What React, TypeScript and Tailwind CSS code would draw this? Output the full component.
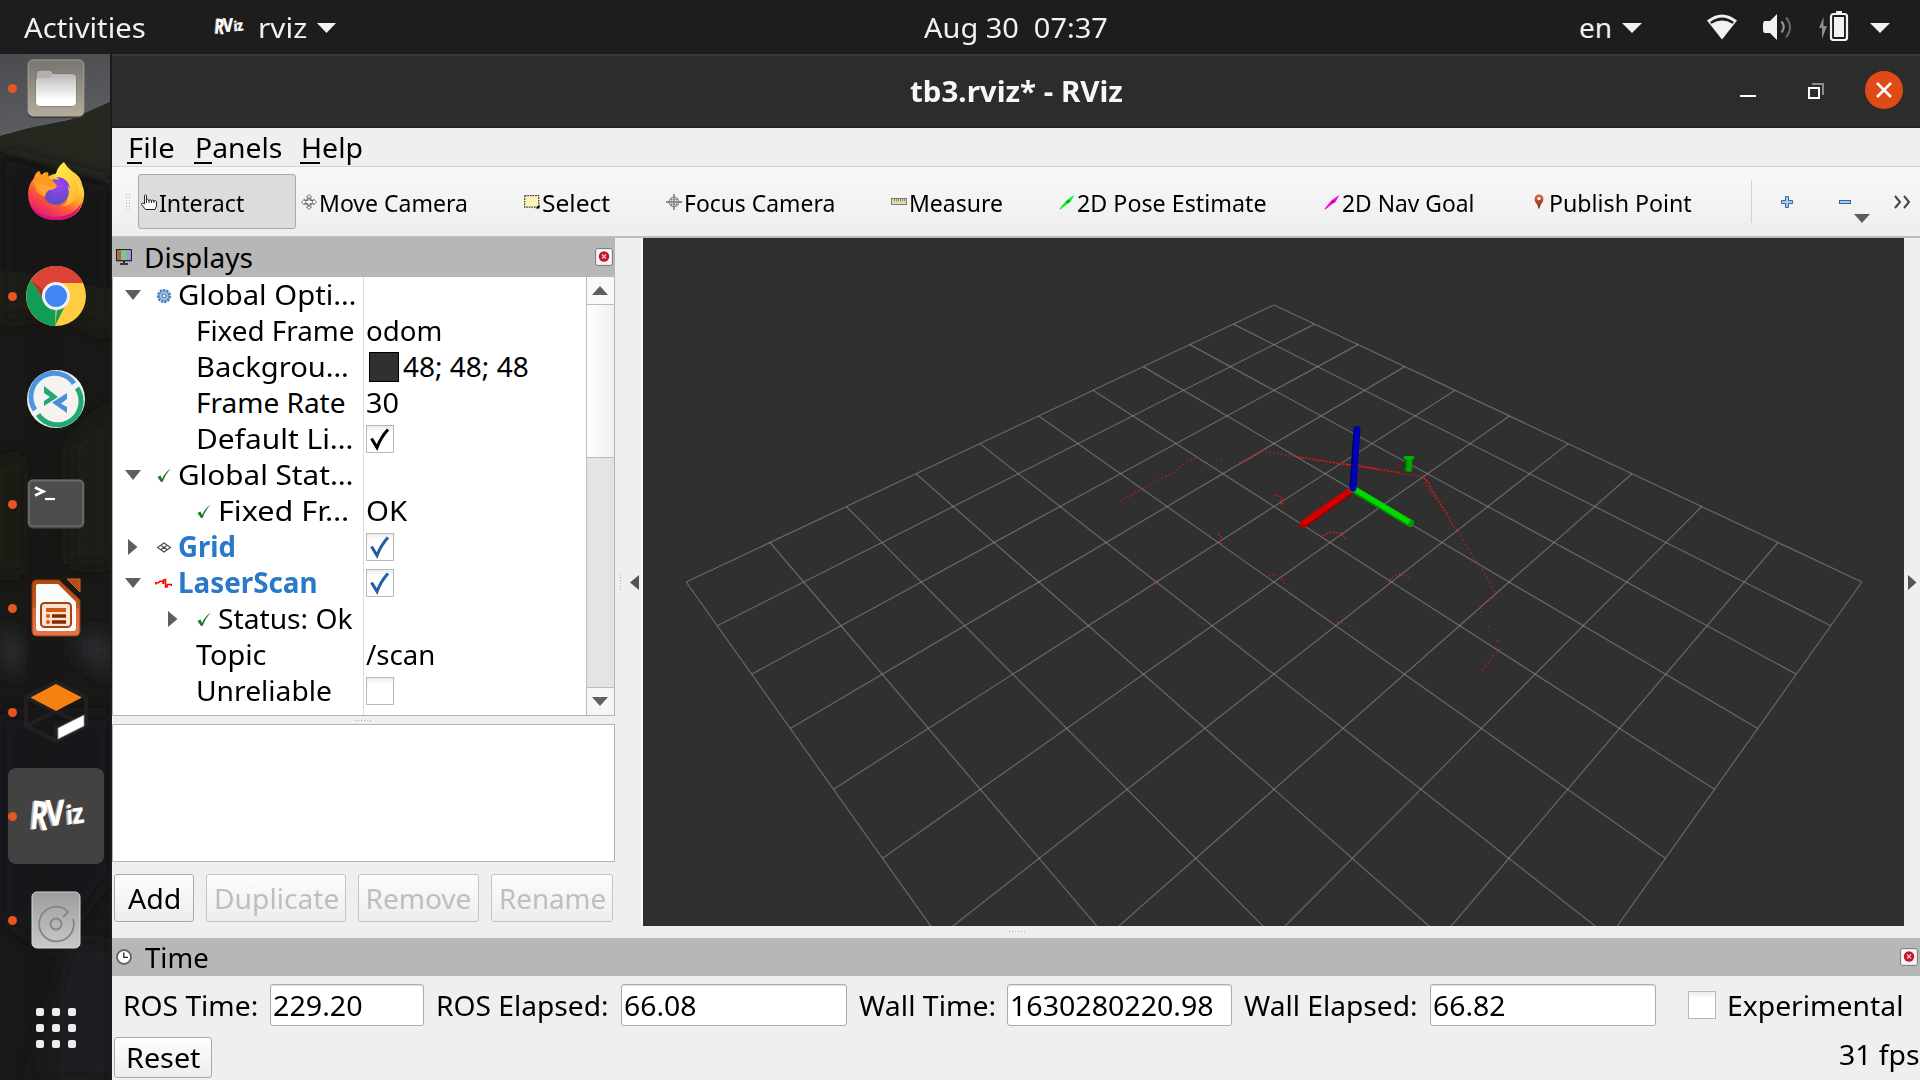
import { useLayoutEffect, useRef, useState, type ReactNode } from "react";

/** A single line of text condensed or widened to occupy exactly `w` pixels. */
function T({ w, children, className = "" }: { w: number; children: ReactNode; className?: string }) {
  const ref = useRef<HTMLSpanElement>(null);
  const [s, setS] = useState(1);
  useLayoutEffect(() => {
    if (ref.current) setS(w / ref.current.offsetWidth);
  }, [w]);
  return (
    <span className={`block shrink-0 whitespace-pre ${className}`} style={{ width: w }}>
      <span ref={ref} className="inline-block origin-left" style={{ transform: `scaleX(${s})` }}>
        {children}
      </span>
    </span>
  );
}

const Down = ({ className = "" }: { className?: string }) => (
  <svg className={`shrink-0 ${className}`} viewBox="0 0 20 10" preserveAspectRatio="none" fill="currentColor">
    <path d="M0 0H20L10 10Z" />
  </svg>
);

function RvizMark({ className = "" }: { className?: string }) {
  const letters = (
    <>
      <text fontSize="41" transform="translate(2.500 31.500) rotate(5) scale(.68 1)">R</text>
      <text fontSize="37" transform="translate(20 28.500) rotate(-2) scale(.82 1)">V</text>
      <text fontSize="27" transform="translate(41 27) rotate(-3) scale(.85 1)">i</text>
      <text fontSize="29" transform="translate(48 26.500) rotate(-7) scale(.85 1)">z</text>
    </>
  );
  return (
    <svg viewBox="0 0 60 38" className={`overflow-visible ${className}`} fontFamily="Open Sans, sans-serif" fontWeight="700">
      <g fill="#b4b4b4" transform="translate(-1.8 .8)">{letters}</g>
      <g fill="#fff">{letters}</g>
    </svg>
  );
}

/* ---------- Top bar ---------- */

function TopBar() {
  return (
    <header className="flex h-[54px] shrink-0 items-center bg-[#1d1d1d] text-[28px] leading-[52px] text-[#f2f2f2]">
      <T w={122} className="mb-px ml-6">Activities</T>
      <RvizMark className="ml-[67px] h-[20px] w-[31px] shrink-0" />
      <T w={49} className="mb-px ml-[14px]">rviz</T>
      <Down className="ml-[10px] mt-[2px] h-[10px] w-[19px]" />
      <T w={184} className="mb-px ml-[588px]">Aug 30  07:37</T>
      <T w={33} className="mb-px ml-[471px]">en</T>
      <Down className="ml-[10px] mt-[2px] h-[10px] w-[20px]" />
      <svg className="ml-[64px] h-[26px] w-[32px] shrink-0" viewBox="0 0 32 26">
        <path d="M16 25.5 1 6.5Q16-5.5 31 6.5Z" fill="#f2f2f2" />
        <path d="M4 8.2Q16-1 28 8.2L26.5 9.8Q16 3.200 5.500 9.800Z" fill="#1d1d1d" />
      </svg>
      <svg className="ml-[25px] h-[26px] w-[30px] shrink-0" viewBox="0 0 30 26" fill="none">
        <path d="M2 7h5l7-7v26l-7-7H2Q0 19 0 15v-4q0-4 2-4z" fill="#f2f2f2" />
        <path d="M18.500 7.500q4.500 5.500 0 11" stroke="#999" strokeWidth="2" />
        <path d="M23 3.500q8 9.500 0 20" stroke="#6a6a6a" strokeWidth="2" />
      </svg>
      <svg className="mb-[2px] ml-[26px] h-[30px] w-[30px] shrink-0" viewBox="0 0 30 30">
        <path d="M4.500 6 0 17h3v11l5-13H4.500Z" fill="#8d8d8d" />
        <rect x="12" y="3" width="16" height="26" rx="2.500" fill="none" stroke="#f2f2f2" strokeWidth="2.200" />
        <rect x="17" y="0" width="6" height="3" fill="#f2f2f2" />
        <rect x="15" y="6" width="10" height="20" fill="#f2f2f2" />
      </svg>
      <Down className="ml-[21px] mt-[2px] h-[10px] w-[20px]" />
    </header>
  );
}

/* ---------- Dock ---------- */

const FilesIcon = () => (
  <svg viewBox="0 0 64 64" className="h-16 w-16">
    <defs>
      <linearGradient id="fa" x2="0" y2="1"><stop stopColor="#77756f" /><stop offset="1" stopColor="#b3ac9b" /></linearGradient>
      <linearGradient id="fb" x2="0" y2="1"><stop stopColor="#b9b9b9" /><stop offset=".8" stopColor="#fff" /></linearGradient>
    </defs>
    <rect x="3" y="4" width="58" height="58" rx="6" fill="#3a3935" />
    <rect x="4" y="4" width="56" height="56" rx="5" fill="url(#fa)" stroke="#aaa79c" />
    <path d="M12 18q0-4 4-4h9q2 0 3 1.500l2 2.500h18q4 0 4 4v24q0 4-4 4H16q-4 0-4-4Z" fill="#b0afac" stroke="#6f6c64" />
    <path d="M12 25q0-3 3-3h10l4-4h19q4 0 4 4v24q0 4-4 4H16q-4 0-4-4Z" fill="url(#fb)" />
  </svg>
);

const FirefoxIcon = () => (
  <svg viewBox="0 0 64 64" className="h-16 w-16">
    <defs>
      <linearGradient id="xa" x1=".85" y1=".1" x2=".25" y2="1">
        <stop stopColor="#fff44f" /><stop offset=".35" stopColor="#ffae2b" /><stop offset=".6" stopColor="#ff5a36" /><stop offset="1" stopColor="#e0127d" />
      </linearGradient>
      <radialGradient id="xb" cx=".6" cy=".25" r=".8"><stop stopColor="#a245f5" /><stop offset=".5" stopColor="#7b45d8" /><stop offset="1" stopColor="#4b54c4" /></radialGradient>
      <linearGradient id="xc" x2=".6" y2="1"><stop stopColor="#fff44f" /><stop offset="1" stopColor="#ffb52e" /></linearGradient>
    </defs>
    <path d="M15 11q1 3 2 5 2-3 5-4l2 5q6-4 10-3L56 20q5 9 4 17Q57 60 32 60 5 59 4 34q0-9 6-16 1-5 5-7Z" fill="url(#xa)" />
    <path d="M5 42q8 15 27 15 19-1 26-15-5 18-26 18T5 42Z" fill="#d9107a" />
    <path d="M40 2q-9 6-8.500 17Q43 22 44 34t-9 13q13-1 18-10 3-7 0-16 4 4 4 9 3-10-5-16-9-6-12-12Z" fill="url(#xc)" />
    <circle cx="32" cy="32" r="12.800" fill="url(#xb)" />
    <path d="M32 17q12 0 14 12-3-5-9-5Q37 20 32 17Z" fill="#8e3be8" />
    <path d="M15 11q2 4 4 5 2-3 5-4l1 6q6 4 8 8-1 3-8 4-3 2-4 7Q12 34 11 26q-3-8 4-15Z" fill="#ff9a1f" />
    <path d="M11 25q5-2 10 0t11 1q-1 4-7 4-4 1-4 5-5-5-10-10Z" fill="#ffa436" />
  </svg>
);

const ChromeIcon = () => (
  <svg viewBox="0 0 60 60" className="h-[60px] w-[60px]">
    <circle cx="30" cy="30" r="30" fill="#ffcd40" />
    <path d="M30 30 29 60A30 30 0 0 1 5 14L18 34Z" fill="#0f9d58" />
    <path d="M29 60 39 40 26 38 18 36 22 44 31 44Z" fill="#0f9d58" />
    <path d="M5 14A30 30 0 0 1 57.500 17H30L18 34Z" fill="#db4437" />
    <path d="M18 34 5 14l11 9Z" fill="#a83730" />
    <circle cx="30" cy="30" r="14" fill="#f1f1f1" />
    <circle cx="30" cy="30" r="11" fill="#4285f4" />
  </svg>
);

const RemminaIcon = () => (
  <svg viewBox="0 0 60 60" className="-mt-[2px] h-[60px] w-[60px]" fill="none">
    <circle cx="30" cy="30" r="29" fill="#f4f3ef" />
    <path d="M9 41A23.500 23.500 0 0 1 48 14.500" stroke="#4a94e0" strokeWidth="5" />
    <path d="M51 19A23.500 23.500 0 0 1 12 45.500" stroke="#20aa72" strokeWidth="5" />
    <path d="M18 17v7l6 4-6 4v5l14-9Z" fill="#20aa72" />
    <path d="M41 24v6l-6 4.500 6 3.500v6L26 33.500Z" fill="#4a90d9" />
  </svg>
);

const TerminalIcon = () => (
  <svg viewBox="0 0 60 52" className="h-[52px] w-[60px]">
    <rect x="1" y="1" width="58" height="50" rx="6" fill="#303030" />
    <rect x="3" y="2.500" width="54" height="46" rx="4" fill="#4d4d4d" stroke="#686868" strokeWidth="2" />
    <path d="M9 9.500 17.500 13.500 9 17.500" stroke="#fff" strokeWidth="2.500" fill="none" />
    <path d="M19 21h10" stroke="#fff" strokeWidth="2.200" />
  </svg>
);

const ImpressIcon = () => (
  <svg viewBox="0 0 52 60" className="h-[60px] w-[52px]">
    <defs><linearGradient id="ia" x2="0" y2="1"><stop stopColor="#b34a10" /><stop offset=".48" stopColor="#c4551b" /><stop offset=".52" stopColor="#dd6a3c" /><stop offset="1" stopColor="#e5744a" /></linearGradient></defs>
    <path d="M7 2H29L50 22v31q0 5-5 5H7q-5 0-5-5V7q0-5 5-5Z" fill="url(#ia)" stroke="#8f3a0b" />
    <path d="M37 1H50V14Z" fill="#b24b16" stroke="#d1642a" />
    <path d="M8 6H28L46 24v26q0 3-3 3H9q-3 0-3-3V8q0-2 2-2Z" fill="#fbfbfb" />
    <rect x="11" y="25" width="30" height="24" rx="3.500" fill="#fbe2d3" stroke="#a3430c" strokeWidth="2" />
    <path d="M16 32h20" stroke="#d25b14" strokeWidth="4" />
    <path d="M22 38h14M22 44h14" stroke="#7d2c00" strokeWidth="3.600" />
    <circle cx="18" cy="38" r="2" fill="#d25b14" /><circle cx="18" cy="44" r="2" fill="#d25b14" />
  </svg>
);

const GazeboIcon = () => (
  <svg viewBox="0 0 64 64" className="h-16 w-16" fill="none">
    <path d="M32 2 62 17V46L32 61 2 46V17ZM2 46 32 31 62 46M2 17 32 32M32 32V31M32 45V61" stroke="#231e20" strokeWidth="4" />
    <path d="M32 4 58 17.500 32 31 6.500 17.500Z" fill="#f58113" />
    <path d="M34 48 60 35V46L34 59Z" fill="#fff" stroke="#999" strokeWidth=".8" />
  </svg>
);

const DiskIcon = () => (
  <svg viewBox="0 0 50 60" className="h-[60px] w-[50px]" fill="none">
    <defs><linearGradient id="da" x2="0" y2="1"><stop stopColor="#9d9d9d" /><stop offset="1" stopColor="#c9c9c9" /></linearGradient></defs>
    <rect x="1" y="2" width="48" height="56" rx="5" fill="url(#da)" stroke="#d8d8d8" />
    <path d="M42 29A17.300 17.300 0 1 1 33 18.500L37 22 32 27" stroke="#848484" strokeWidth="1.800" />
    <circle cx="25" cy="34" r="5.500" stroke="#848484" strokeWidth="1.800" />
  </svg>
);

const AppsIcon = () => (
  <div className="mt-[8px] grid grid-cols-3 gap-2">
    {Array.from({ length: 9 }, (_, i) => <i key={i} className="h-2 w-2 rounded-[2px] bg-[#ededed]" />)}
  </div>
);

const dockItems: { icon: ReactNode; running: boolean; active?: boolean }[] = [
  { icon: <FilesIcon />, running: true },
  { icon: <FirefoxIcon />, running: false },
  { icon: <ChromeIcon />, running: true },
  { icon: <RemminaIcon />, running: false },
  { icon: <TerminalIcon />, running: true },
  { icon: <ImpressIcon />, running: true },
  { icon: <GazeboIcon />, running: true },
  { icon: <RvizMark className="h-[37px] w-[58px]" />, running: true, active: true },
  { icon: <DiskIcon />, running: true },
  { icon: <AppsIcon />, running: false },
];

function Dock() {
  return (
    <nav className="relative flex w-[112px] shrink-0 flex-col overflow-hidden bg-[#181817]">
      <svg className="absolute inset-0 h-full w-full" viewBox="0 0 112 1026" preserveAspectRatio="none">
        <defs>
          <filter id="soft" x="-30%" y="-30%" width="160%" height="160%"><feGaussianBlur stdDeviation="9" /></filter>
          <linearGradient id="sky" x2=".3" y2="1"><stop stopColor="#4a4b4e" /><stop offset="1" stopColor="#5c5e62" /></linearGradient>
        </defs>
        <path d="M0 0H110V48L70 66 30 74 0 82Z" fill="url(#sky)" />
        <path d="M0 83 30 74 70 66 110 48V130L0 98Z" fill="#262820" />
        <g filter="url(#soft)">
          <path d="M0 98 112 128V250H0Z" fill="#171718" />
          <path d="M0 215 112 235V282L60 258 0 266Z" fill="#1f1e12" />
          <path d="M70 390 112 350V510H70Z" fill="#1d1d12" />
          <path d="M0 410 20 400V520H0Z" fill="#1a1b15" />
          <path d="M0 570 24 585 20 625 0 610ZM76 580H112V625L76 600Z" fill="#2b2b2d" />
          <path d="M0 660H112V820L50 900 0 860Z" fill="#17191b" />
          <path d="M70 890H112V1026H30Z" fill="#1f1f22" />
        </g>
        <path d="M27 240H60V1026H27Z" fill="#181614" opacity=".45" />
        <path d="M110 0h2V1026h-2z" fill="#1b1b1b" />
      </svg>
      <div className="relative -mt-[18px] flex flex-col">
        {dockItems.map((d, i) => (
          <div key={i} className="flex h-[104px] w-[112px] shrink-0 items-center">
            <div className={`ml-2 flex h-24 w-24 items-center rounded-lg ${d.active ? "bg-[#4b4a49]/85" : ""}`}>
              <i className={`h-[9px] w-[9px] shrink-0 rounded-full ${d.running ? "bg-[#e95420]" : ""}`} />
              <div className="-ml-[9px] flex w-24 justify-center">{d.icon}</div>
            </div>
          </div>
        ))}
      </div>
    </nav>
  );
}

/* ---------- Window chrome ---------- */

function TitleBar() {
  return (
    <div className="flex h-[74px] shrink-0 items-center border-b-2 border-t-2 border-b-[#232323] border-t-[#383838] bg-[#2c2c2c] text-[28px] font-bold leading-[70px] text-[#f7f7f7]">
      <T w={213} className="mb-px ml-[798px]">tb3.rviz* - RViz</T>
      <i className="ml-[617px] mt-[9px] h-[2px] w-4 bg-white" />
      <svg className="ml-[52px] h-4 w-4 shrink-0" viewBox="0 0 16 16" fill="none" strokeWidth="2">
        <path d="M4 1H15V12" stroke="#8c8c8c" />
        <rect x="1" y="5" width="10" height="10" stroke="#fff" />
      </svg>
      <div className="mb-[2px] ml-[41px] flex h-[38px] w-[38px] items-center justify-center rounded-full bg-[#e04a17]">
        <svg className="h-4 w-4" viewBox="0 0 16 16"><path d="M1 1 15 15M15 1 1 15" stroke="#fff" strokeWidth="2.600" /></svg>
      </div>
    </div>
  );
}

const Mnemonic = ({ w, uw, text, className }: { w: number; uw: number; text: string; className: string }) => (
  <div className={`flex flex-col ${className}`}>
    <T w={w} className="h-[34px] leading-[38px]">{text}</T>
    <i className="-ml-px h-[2px] bg-black" style={{ width: uw }} />
  </div>
);

function MenuBar() {
  return (
    <div className="flex h-[39px] shrink-0 border-b border-[#d2d2d2] bg-[#efefef] text-[28px]">
      <Mnemonic w={47} uw={15} text="File" className="ml-[16px]" />
      <Mnemonic w={87} uw={18} text="Panels" className="ml-[20px]" />
      <Mnemonic w={62} uw={20} text="Help" className="ml-[19px]" />
    </div>
  );
}

const arrowIcon = (c: string, d: string) => (
  <svg viewBox="0 0 16 16">
    <path d="M.3 15 6 8 8 6 15.500 .800 11.500 8 9 9.500 1.300 15.600Z" fill={c} />
    <path d="M7 7.300 11 6 9 9.500Z" fill={d} />
  </svg>
);

const tools: { label: string; w: number; box: string; icon: ReactNode }[] = [
  {
    label: "Interact", w: 85, box: "w-[158px] mr-[2px] border-[#a9a9a9] bg-[#dcdcdc]",
    icon: <svg viewBox="0 0 16 16" fill="#fff" stroke="#222" strokeWidth="1"><path d="M3.500 8V1.500Q4.500 0 5.500 1.500V6Q6.500 4.500 7.800 6.500 9 5 10.500 6.500 11.500 5.500 13 7q2-1 2.500.5V12l-1.500 3.500H4.500L.5 10.500Q.5 8 3.500 10ZM5.500 5v4M8 6v3M10.500 6.500V9M13 7v2" /></svg>,
  },
  {
    label: "Move Camera", w: 149, box: "w-[223px] border-transparent",
    icon: <svg viewBox="0 0 16 16" fill="#fff" stroke="#666" strokeWidth=".9"><path d="M8 .5 10.500 3H9v3.500h3.500V5L15.500 8l-3 3V9.500H9V13h1.500L8 15.500 5.500 13H7V9.500H3.500V11L.5 8l3-3v1.500H7V3H5.500Z" /><circle cx="8" cy="8" r="3.500" fill="none" /></svg>,
  },
  {
    label: "Select", w: 68, box: "w-[141px] border-transparent",
    icon: <svg viewBox="0 0 16 16"><rect x=".7" y="1.700" width="14" height="11.500" fill="#fdf6b8" stroke="#333" strokeWidth="1.200" strokeDasharray="1.600 1" /><path d="M15.500 10.500v4h-4Z" /></svg>,
  },
  {
    label: "Focus Camera", w: 151, box: "w-[226px] border-transparent pl-[3px]",
    icon: <svg viewBox="0 0 16 16" fill="none" stroke="#8a8a8a"><circle cx="8" cy="8" r="4.800" strokeWidth="1.200" /><path d="M8 0V16M0 8H16" strokeWidth="1.800" /><path d="M5.500 4v8M10.500 4v8M4 5.500h8M4 10.500h8" strokeWidth=".7" /></svg>,
  },
  {
    label: "Measure", w: 94, box: "w-[168px] border-transparent",
    icon: <svg viewBox="0 0 16 16"><rect x=".5" y="4.500" width="15" height="6" fill="#e6dcaa" stroke="#777" /><path d="M3.500 5v2.500M5.500 5v2.500M7.500 5v2.500M9.500 5v2.500M11.500 5v2.500M13.500 5v2.500" stroke="#777" strokeWidth=".8" /></svg>,
  },
  { label: "2D Pose Estimate", w: 190, box: "w-[265px] border-transparent", icon: arrowIcon("#05f52c", "#0a8f1d") },
  { label: "2D Nav Goal", w: 132, box: "w-[207px] border-transparent", icon: arrowIcon("#f90ae0", "#8e0a80") },
  {
    label: "Publish Point", w: 143, box: "w-[223px] border-transparent",
    icon: <svg viewBox="0 0 16 16"><defs><linearGradient id="pin" x2="0" y2="1"><stop stopColor="#f0603c" /><stop offset="1" stopColor="#5b3a1c" /></linearGradient></defs><path d="M8 15.500Q7 11 4 7.500 2.500 1 8 .300 13.500 1 12 7.500 9 11 8 15.500Z" fill="url(#pin)" /><circle cx="8" cy="4.600" r="1.700" fill="#fff" /></svg>,
  },
];

const gripV = "w-[5px] bg-[radial-gradient(circle,#b5b5b5_0.8px,transparent_1px)] bg-[length:3px_3px]";

function ToolBar() {
  return (
    <div className="flex h-[71px] shrink-0 items-center border-b-2 border-[#bdbdbd] bg-linear-to-b from-[#f8f8f8] to-[#eeeeee] text-[23.500px]">
      <i className={`ml-[13px] mr-2 h-[17px] ${gripV}`} />
      {tools.map((t) => (
        <div key={t.label} className={`flex h-[55px] shrink-0 items-center rounded-[3px] border pl-[2px] ${t.box}`}>
          <span className="block h-4 w-4 shrink-0">{t.icon}</span>
          <T w={t.w} className="ml-[2px] mt-[3px] leading-[48px]">{t.label}</T>
        </div>
      ))}
      <i className="h-[43px] w-px bg-[#d0d0d0]" />
      <svg className="ml-[29px] h-3 w-3" viewBox="0 0 12 12"><path d="M4.500.5h3v4h4v3h-4v4h-3v-4h-4v-3h4Z" fill="#a8c8ee" stroke="#3465a4" /></svg>
      <svg className="ml-[46px] h-3 w-3" viewBox="0 0 12 12"><rect x=".5" y="4.500" width="11" height="3" fill="#a8c8ee" stroke="#3465a4" /></svg>
      <Down className="ml-[3px] mt-[34px] h-[9px] w-[16px] text-[#5c5c5c]" />
      <svg className="ml-[24px] h-[14px] w-[17px]" viewBox="0 0 17 14" fill="none" stroke="#444" strokeWidth="2"><path d="M1 1 6 7 1 13M10 1 15 7 10 13" /></svg>
    </div>
  );
}

const CloseBtn = () => (
  <svg className="h-[18px] w-[18px] shrink-0" viewBox="0 0 18 18">
    <rect x=".6" y=".6" width="16.800" height="16.800" rx="2" fill="#f5f5f5" stroke="#777" />
    <circle cx="9" cy="8.500" r="5.200" fill="#c8142c" />
    <path d="M7 6.500 11 10.500M11 6.500 7 10.500" stroke="#f4c8cc" strokeWidth="1.300" />
  </svg>
);

/* ---------- Displays tree ---------- */

const Expanded = () => <Down className="h-[10px] w-4 text-[#5f5f5f]" />;
const Collapsed = () => (
  <svg className="ml-[3px] mr-[3px] h-4 w-[10px] shrink-0" viewBox="0 0 10 16"><path d="M0 0 9.500 8 0 16Z" fill="#5f5f5f" /></svg>
);
const Ok = () => <svg viewBox="0 0 15 15"><path d="M.5 9 3.500 7.500 5 11Q7.500 5 13.500 .5 8 7 5.500 14H4Z" fill="#1c7a1c" /></svg>;
const Gear = () => (
  <svg viewBox="0 0 15 15" fill="none" className="-ml-px"><circle cx="7.500" cy="7.500" r="5.600" stroke="#3f76b8" strokeWidth="2" strokeDasharray="2.200 .9" /><circle cx="7.500" cy="7.500" r="4.500" fill="#a6c4e8" stroke="#5a8ac6" /><circle cx="7.500" cy="7.500" r="1.800" fill="#eef4fb" stroke="#3f76b8" /></svg>
);
const GridIcon = () => <svg viewBox="0 0 15 15" fill="none" stroke="#444" strokeWidth="1.100"><path d="M7 3 13.500 7.500 7 12 .5 7.500ZM3.700 5.200 10.300 9.800M10.300 5.200 3.700 9.800" /></svg>;
const ScanIcon = () => (
  <svg viewBox="0 0 17 15" className="-ml-[2px] h-[15px] w-[17px] max-w-none">
    <path d="M.8 8.500V6.800H3.500L5 5.200H8V8M8.500 8V4L10.500 3.500V11H12L12.500 8.500H16.500V10" fill="none" stroke="#f00" strokeWidth="1.600" />
  </svg>
);

const Check = ({ color }: { color?: string }) => (
  <span className="flex h-7 w-7 items-center justify-center border border-[#b8b8b8] bg-linear-to-b from-[#ececec] via-white via-25% to-white">
    {color && <svg viewBox="0 0 24 24" className="h-6 w-6"><path d="M3.500 11.500 9 20.500Q13 10 20 2.500" fill="none" stroke={color} strokeWidth="3" /></svg>}
  </span>
);

type Row = { pad: string; arrow?: ReactNode; icon?: ReactNode; label: string; w: number; bold?: boolean; value?: ReactNode };

const rows: Row[] = [
  { pad: "pl-3", arrow: <Expanded />, icon: <Gear />, label: "Global Opti…", w: 179 },
  { pad: "pl-[83px]", label: "Fixed Frame", w: 159, value: <T w={76}>odom</T> },
  { pad: "pl-[83px]", label: "Backgrou…", w: 153, value: <><i className="ml-[3px] mr-[4px] mt-[2px] h-[30px] w-[30px] border border-black bg-[#303030]" /><T w={126}>48; 48; 48</T></> },
  { pad: "pl-[83px]", label: "Frame Rate", w: 150, value: <T w={33}>30</T> },
  { pad: "pl-[83px]", label: "Default Li…", w: 158, value: <Check color="#000" /> },
  { pad: "pl-3", arrow: <Expanded />, icon: <Ok />, label: "Global Stat…", w: 175 },
  { pad: "pl-[84px]", icon: <Ok />, label: "Fixed Fr…", w: 131, value: <T w={41}>OK</T> },
  { pad: "pl-3", arrow: <Collapsed />, icon: <GridIcon />, label: "Grid", w: 58, bold: true, value: <Check color="#1f5fa5" /> },
  { pad: "pl-3", arrow: <Expanded />, icon: <ScanIcon />, label: "LaserScan", w: 140, bold: true, value: <Check color="#1f5fa5" /> },
  { pad: "pl-[52px]", arrow: <Collapsed />, icon: <Ok />, label: "Status: Ok", w: 135 },
  { pad: "pl-[83px]", label: "Topic", w: 70, value: <T w={69}>/scan</T> },
  { pad: "pl-[83px]", label: "Unreliable", w: 136, value: <Check /> },
];

function Tree() {
  return (
    <div className="flex h-[439px] shrink-0 border border-t-0 border-[#b4b4b4] bg-white">
      <div className="flex w-[473px] shrink-0 flex-col">
        {rows.map((r, i) => (
          <div key={i} className="flex h-9 shrink-0 items-center leading-[34px]">
            <div className={`flex h-9 w-[251px] shrink-0 items-center border-r border-[#dcdcdc] ${r.pad}`}>
              {r.arrow}
              {r.icon && <span className={`mr-[6px] block h-[15px] w-[15px] shrink-0 ${r.arrow ? "ml-[16px]" : ""}`}>{r.icon}</span>}
              <T w={r.w} className={`mb-[2px] ${r.bold ? "font-bold text-[#2a78c8]" : ""}`}>{r.label}</T>
            </div>
            <div className={`ml-[2px] flex items-center ${i === 4 || r.bold || i === 11 ? "" : "mb-[2px]"}`}>{r.value}</div>
          </div>
        ))}
        <div className="w-[251px] flex-1 border-r border-[#dcdcdc]" />
      </div>
      <div className="flex flex-1 flex-col border-l border-[#bcbcbc]">
        <div className="flex h-[28px] items-center justify-center border-b border-[#bcbcbc] bg-[#f9f9f9] pr-px"><Down className="h-[9px] w-4 rotate-180 text-[#5f5f5f]" /></div>
        <div className="h-[152px] bg-linear-to-r from-[#fefefe] to-[#f1f1f1]" />
        <div className="flex-1 border-y border-[#bcbcbc] bg-[#e4e4e4]" />
        <div className="flex h-[27px] items-center justify-center bg-[#f6f6f6] pb-px pr-px"><Down className="h-[9px] w-4 text-[#5f5f5f]" /></div>
      </div>
    </div>
  );
}

const btn = "flex items-center justify-center rounded-[3px] border bg-linear-to-b from-[#fdfdfd] to-[#ededed]";

function DisplaysPanel() {
  return (
    <section className="flex w-[503px] shrink-0 flex-col">
      <div className="flex h-[39px] shrink-0 items-center bg-[#b7b7b7] pb-px pl-1 pr-[2px] leading-[36px]">
        <svg className="h-4 w-4" viewBox="0 0 16 16">
          <rect x=".7" y=".7" width="14.600" height="11" fill="#7f7" stroke="#111" strokeWidth="1.200" />
          <path d="M1.300 1.300h4v9.800h-4z" fill="#b85c5c" /><path d="M5.300 1.300h5v9.800h-5z" fill="#7cc87c" /><path d="M10.300 1.300h4.400v9.800h-4.400z" fill="#9a9ae0" />
          <path d="M8 12v2M4 15h8" stroke="#111" strokeWidth="1.600" />
        </svg>
        <T w={109} className="mb-px ml-[12px]">Displays</T>
        <span className="ml-auto"><CloseBtn /></span>
      </div>
      <Tree />
      <div className="flex h-2 items-center justify-center"><i className="h-px w-[17px] bg-[repeating-linear-gradient(90deg,#b0b0b0_0_1px,transparent_1px_3px)]" /></div>
      <div className="h-[138px] border border-[#b4b4b4] bg-white" />
      <div className="mt-3 flex pl-[2px] leading-[46px]">
        <div className={`${btn} h-12 w-[80px] border-[#a9a9a9]`}><T w={53}>Add</T></div>
        <div className={`${btn} ml-3 h-12 w-[140px] border-[#c4c4c4] text-[#bebebe]`}><T w={125}>Duplicate</T></div>
        <div className={`${btn} ml-3 h-12 w-[121px] border-[#c4c4c4] text-[#bebebe]`}><T w={106}>Remove</T></div>
        <div className={`${btn} ml-3 h-12 w-[122px] border-[#c4c4c4] text-[#bebebe]`}><T w={107}>Rename</T></div>
      </div>
    </section>
  );
}

/* ---------- 3D view ---------- */

/** Ground-plane cell (i, j) to screen under the perspective of the orbit camera. */
function project(i: number, j: number): [number, number] {
  const d = i + j;
  const q = 1 - 0.03325 * d;
  return [1274 + ((j - i) * 39.24) / q, (305 + 8.35 * d) / q];
}

const scans: { pts: string; dash: string }[] = [
  { pts: "1120,501 1144,488 1158,480 1173,473 1185,463 1197,457", dash: "1.3 3" },
  { pts: "1239,463 1245,461 1251,458 1257,454 1262,451", dash: "1.5 1.5" },
  { pts: "1262,451 1271,452.500 1280,454 1298,457", dash: "1.3 2.6" },
  { pts: "1298,457 1320,460.500 1340,463.500 1357,466 1378,469", dash: "2.5 1" },
  { pts: "1340,464 1360,465.500 1372,468.500 1400,472.500", dash: "1.5 1.5" },
  { pts: "1378,469 1400,473 1423,477", dash: "1.3 2" },
  { pts: "1423,477 1428,482 1432,490 1438,500 1443,508 1447,514", dash: "2.5 1" },
  { pts: "1424,479 1427,487 1436,499", dash: "1.2 2" },
  { pts: "1447,514 1452,524 1457.500,531", dash: "1.5 2" },
  { pts: "1457.500,531 1466,545 1472,555 1480,566 1489,581 1495,593", dash: "1.5 3.5" },
  { pts: "1495,593 1493,598 1488,600 1480,608 1482,616", dash: "1.3 3" },
  { pts: "1488.500,626 1489,627", dash: "1.3 3" },
  { pts: "1497,640 1498,641", dash: "1.3 3" },
  { pts: "1500,649 1493,656 1488,663 1479,672", dash: "1.4 3" },
  { pts: "1274,495 1280,496 1284,500 1282,505 1280,501 1283,498", dash: "1.5 1.5" },
  { pts: "1210,534 1211,535", dash: "1.3 3" },
  { pts: "1218,534 1221.500,537 1221.500,545", dash: "2 1.5" },
  { pts: "1152,579 1154,582 1157,585", dash: "1.5 2" },
  { pts: "1202,623 1203,625", dash: "1.3 3" },
  { pts: "1265,576 1270,575.500 1275,574.500 1280,577 1284,581 1284,584", dash: "1.3 2.5" },
  { pts: "1323,536 1328,533 1333,532 1341,533.500 1346,539", dash: "2 1.5" },
  { pts: "1389,583 1391,578 1399,574 1406.500,576 1411,579", dash: "1.3 2.2" },
  { pts: "1337,622 1346.500,623.500 1353,628.500", dash: "1.3 3" },
  { pts: "1221,459 1222,460", dash: "1.3 3" },
];

function View3D() {
  const lines = Array.from({ length: 11 }, (_, k) => [
    [project(k, 0), project(k, 10)],
    [project(0, k), project(10, k)],
  ]).flat();
  return (
    <svg className="h-[688px] w-[1261px] shrink-0 bg-[#303030]" viewBox="643 238 1261 688">
      <g stroke="#a0a0a4" strokeOpacity=".5" strokeWidth="1.200">
        {lines.map(([a, b], i) => <line key={i} x1={a[0]} y1={a[1]} x2={b[0]} y2={b[1]} />)}
      </g>
      <g fill="none" stroke="#e01818" strokeWidth="1.400" strokeOpacity=".9">
        {scans.map((s, i) => <polyline key={i} points={s.pts} strokeDasharray={s.dash} />)}
      </g>
      <g strokeWidth="7">
        <path d="M1409 457 1408 471.500" stroke="#00a800" />
        <path d="M1405 457.500H1413" stroke="#00b400" strokeWidth="3" strokeLinecap="round" />
        <path d="M1406 460 1405.300 471" stroke="#006a00" strokeWidth="1.500" />
        <g strokeLinecap="round">
          <path d="M1353 489 1303 524" stroke="#d40000" />
          <path d="M1356 490.500 1305 527" stroke="#900000" strokeWidth="1.500" />
          <path d="M1353 489 1410 523" stroke="#00d800" />
          <path d="M1352 491.500 1407 525" stroke="#008a00" strokeWidth="1.500" />
          <path d="M1357 429.500 1353 488" stroke="#0000b4" />
          <path d="M1354.200 431 1350.200 487" stroke="#000068" strokeWidth="1.500" />
        </g>
      </g>
      <ellipse cx="1302.500" cy="524.500" rx="2.500" ry="4" transform="rotate(-35 1302.500 524.500)" fill="#b40000" />
      <ellipse cx="1411" cy="523.500" rx="2.300" ry="4" transform="rotate(30 1411 523.500)" fill="#009a00" />
    </svg>
  );
}

/* ---------- Time panel ---------- */

const Field = ({ w, children, className }: { w: number; children: string; className: string }) => (
  <div className={`flex h-[42px] shrink-0 items-center rounded-[3px] border border-[#ababab] bg-white pl-[2px] leading-[38px] shadow-[inset_0_1px_1px_#ddd] ${className}`}>
    <T w={w} className="mb-px">{children}</T>
  </div>
);

function TimePanel() {
  return (
    <section className="flex shrink-0 flex-col">
      <div className="flex h-[38px] items-center bg-[#b7b7b7] pl-1 pr-[2px] leading-[38px]">
        <svg className="h-4 w-4" viewBox="0 0 16 16"><circle cx="8" cy="8" r="7" fill="#fff" stroke="#666" strokeWidth="1.900" /><path d="M7.800 3.500V8.300H12" fill="none" stroke="#222" strokeWidth="1.300" /></svg>
        <T w={64} className="mb-px ml-[13px]">Time</T>
        <span className="ml-auto"><CloseBtn /></span>
      </div>
      <div className="mt-2 flex h-[42px] items-center leading-[40px]">
        <T w={135} className="ml-[11px]">ROS Time:</T>
        <Field w={90} className="ml-[12px] w-[154px]">229.20</Field>
        <T w={173} className="ml-[12px]">ROS Elapsed:</T>
        <Field w={73} className="ml-[12px] w-[226px]">66.08</Field>
        <T w={137} className="ml-[12px]">Wall Time:</T>
        <Field w={204} className="ml-[11px] w-[225px]">1630280220.98</Field>
        <T w={174} className="ml-[12px]">Wall Elapsed:</T>
        <Field w={73} className="ml-[12px] w-[226px]">66.82</Field>
        <span className="ml-[32px]"><Check /></span>
        <T w={177} className="ml-[11px]">Experimental</T>
      </div>
      <div className="mt-[11px] flex h-[43px] items-start justify-between pl-[2px]">
        <div className={`${btn} h-[41px] w-[98px] border-[#a9a9a9] leading-[39px]`}><T w={75}>Reset</T></div>
        <T w={81} className="leading-[34px]">31 fps</T>
      </div>
    </section>
  );
}

export default function App() {
  return (
    <div className="flex h-[1080px] w-[1920px] flex-col overflow-hidden bg-[#efefef] font-['Noto_Sans',sans-serif] text-black">
      <TopBar />
      <div className="flex min-h-0 flex-1">
        <Dock />
        <main className="flex w-[1808px] flex-col">
          <TitleBar />
          <MenuBar />
          <ToolBar />
          <div className="flex h-[700px] shrink-0 text-[28px]">
            <DisplaysPanel />
            <div className="flex h-[688px] w-7 items-center border-r-2 border-[#f9f9f9] pl-1">
              <i className="h-[17px] w-[3px] bg-[repeating-linear-gradient(180deg,#b0b0b0_0_1px,transparent_1px_3px)] bg-[length:1px_100%] bg-center bg-no-repeat" />
              <svg className="ml-[8px] h-[15px] w-[9px]" viewBox="0 0 9 15"><path d="M9 0V15L0 7.500Z" fill="#555" /></svg>
            </div>
            <div className="flex flex-col">
              <View3D />
              <i className="ml-[366px] mt-[5px] h-px w-[17px] bg-[repeating-linear-gradient(90deg,#b0b0b0_0_1px,transparent_1px_3px)]" />
            </div>
            <div className="flex h-[688px] w-4 items-center pl-[4px]">
              <svg className="h-[15px] w-[9px]" viewBox="0 0 9 15"><path d="M0 0V15L8.500 7.500Z" fill="#555" /></svg>
            </div>
          </div>
          <div className="text-[28px]"><TimePanel /></div>
        </main>
      </div>
    </div>
  );
}
